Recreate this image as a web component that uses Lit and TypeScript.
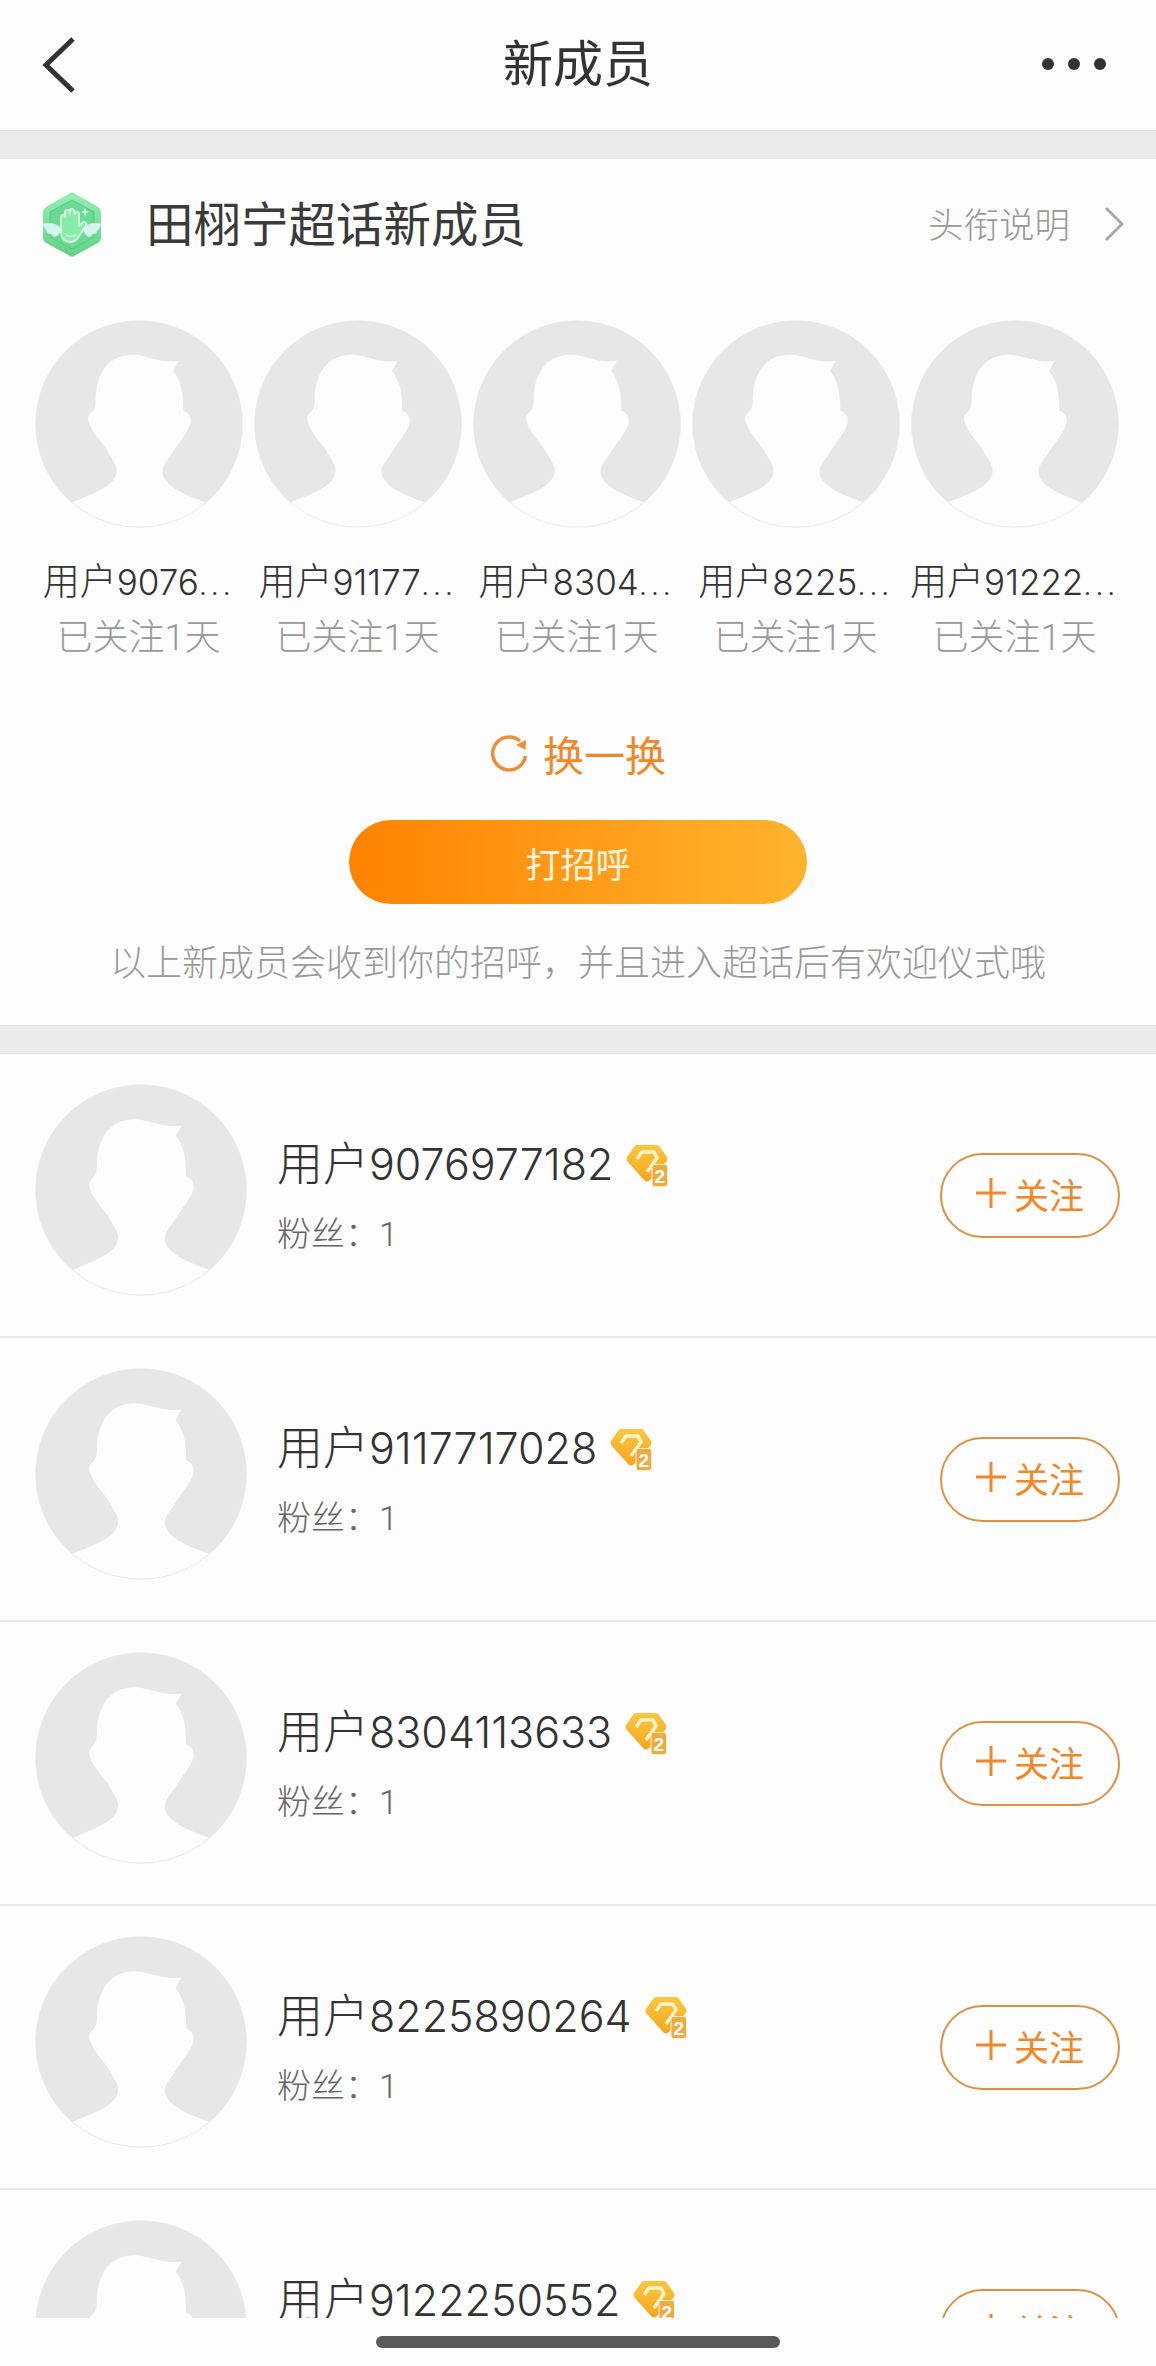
import { LitElement, html, css } from "lit";
import { customElement } from "lit/decorators.js";

const tiles = ["9076", "91177", "8304", "8225", "91222"];
const rows = ["9076977182", "9117717028", "8304113633", "8225890264", "9122250552"];

const avatar = html`<svg class="avatar-svg" viewBox="103 58 624 624" aria-hidden="true">
  <circle cx="415" cy="370" r="310" fill="#e7e7e7"/>
  <path fill="#fdfdfd" d="M285 300C285 210 330 160 400 162C440 163 480 190 535 180L517 210C540 240 548 270 548 330C565 335 572 350 570 365C565 395 530 430 510 465C498 482 485 495 485 515C490 560 560 585 615 605A310 310 0 0 1 215 605C270 580 345 560 348 510C348 490 330 470 320 450C305 425 262 385 262 350C265 335 285 335 285 300Z"/>
  <circle cx="415" cy="370" r="310" fill="none" stroke="#e8e8e8" stroke-width="2"/>
</svg>`;

const greenBadge = html`<svg class="badge" viewBox="0 0 84 84" aria-hidden="true">
  <defs>
    <linearGradient id="g1" x1="0" y1="0" x2="0" y2="1"><stop offset="0" stop-color="#96edb2"/><stop offset="1" stop-color="#62d186"/></linearGradient>
  </defs>
  <path d="M42 10L68 25Q71 27 71 30V56Q71 59 68 61L42 75L16 61Q13 59 13 56V30Q13 27 16 25Z" fill="url(#g1)"/>
  <path d="M42 18L64 30V55L42 67L20 55V30Z" fill="#6bdb94" stroke="#58c981" stroke-width="1"/>
  <path d="M12 42C20 40 26 41 31 46C31 51 27 55 24 55C22 52 20 52 17 51C18 49 16 48 15 47C16 46 13 44 12 42Z" fill="#d4f6ef"/>
  <path d="M72 42C64 40 58 41 53 46C53 51 57 55 60 55C62 52 64 52 67 51C66 49 68 48 69 47C68 46 71 44 72 42Z" fill="#d4f6ef"/>
  <path d="M31 50V36Q31 33 33 33Q35 33 35 35V31Q35 28 37.5 28Q40 28 40 31V29Q40 27 42 27Q44 27 44.500 30V32Q45 30 47 30Q49 30 49 33V44L52 41Q54 39 56 41Q57 43 55 45L49 54Q46 60 40 60Q31 59 31 50Z" fill="#86ecaa" stroke="#d2fae0" stroke-width="2" stroke-linejoin="round"/>
  <path d="M36 53Q41 56 46 53" fill="none" stroke="#d2fae0" stroke-width="1.500"/>
  <path d="M55 25L56 29L59 30L56 31L55 35L54 31L51 30L54 29Z" fill="#d6fbe4"/>
</svg>`;

const diamond = (num: string) => html`<svg class="diamond" viewBox="9 10 44 45" aria-hidden="true">
  <defs>
    <linearGradient id="d1" x1="0" y1="0" x2="0" y2="1"><stop offset="0" stop-color="#fbc740"/><stop offset="1" stop-color="#f5a51e"/></linearGradient>
  </defs>
  <path d="M21 12H41Q43 12 44 14L51 24Q52 26 51 28L34 47Q31 50 28 47L11 28Q10 26 11 24L18 14Q19 12 21 12Z" fill="url(#d1)"/>
  <path d="M21 26L26 19H38L41 25L31 39" fill="none" stroke="#fff3c8" stroke-width="3.500" stroke-linejoin="round"/>
  <rect x="36" y="31.500" width="15.500" height="22" rx="2.500" fill="#f0aa3e" stroke="#fff2d6" stroke-width="1"/>
  <text x="43.800" y="49.500" text-anchor="middle" class="lvl">${num}</text>
</svg>`;

@customElement("app-root")
export class AppRoot extends LitElement {
  static styles = css`
    :host {
      display: block;
      width: 1156px;
      height: 2366px;
      background: #fdfdfd;
      font-family: Roboto, "Noto Sans CJK SC", sans-serif;
      font-weight: 300;
      overflow: hidden;
      color: #333;
    }
    .page { height: 2366px; display: flex; flex-direction: column; }
    .nav {
      height: 130px;
      flex: none;
      box-sizing: border-box;
      padding: 0 42px;
      display: grid;
      grid-template-columns: 100px 1fr 100px;
      align-items: center;
    }
    .nav h1 { margin: 0; font-size: 50px; font-weight: 400; text-align: center; line-height: 130px; color: #333; }
    .back { width: 34px; height: 58px; display: block; margin-top: -1px; }
    .dots { justify-self: end; width: 64px; height: 12px; display: block; margin-right: 8px; margin-top: -2px; }
    .gap { flex: none; background: #ebebeb; border-top: 1px solid #e2e2e2; border-bottom: 1px solid #e6e6e6; box-sizing: border-box; height: 29px; }
    .card { flex: none; height: 866px; box-sizing: border-box; display: flex; flex-direction: column; }
    .card-head {
      height: 130px;
      flex: none;
      display: flex;
      align-items: center;
      padding: 0 32px 0 30px;
    }
    .badge { width: 84px; height: 84px; flex: none; margin-right: 32px; }
    .card-title { font-size: 47.5px; font-weight: 400; color: #3a3a3a; flex: 1; margin-top: -5px; }
    .explain { font-size: 35.5px; color: #999; margin-right: 34px; margin-top: -3px; }
    .chev { width: 20px; height: 36px; display: block; }
    .tiles { display: flex; padding: 31px 0 0 29px; }
    .tile { width: 219px; flex: none; display: flex; flex-direction: column; align-items: center; }
    .tile .avatar-svg { width: 208px; height: 208px; display: block; margin-bottom: 1px; }
    .tile-name { margin-top: 31px; font-size: 37px; line-height: 44px; white-space: nowrap; color: #333; }
    .tile-name .digits { font-family: Inter, sans-serif; font-size: 35px; }
    .tile-name .more { letter-spacing: 3px; }
    .tile-sub { font-size: 36px; line-height: 44px; margin-top: 11px; color: #999; white-space: nowrap; }
    .refresh {
      margin-top: 68px;
      height: 50px;
      display: flex;
      align-items: center;
      justify-content: center;
      gap: 13px;
      color: #f0882a;
      font-size: 41px;
      font-weight: 400;
      flex: none;
    }
    .refresh svg { width: 40px; height: 40px; display: block; }
    .hello {
      margin: 42px auto 0;
      width: 458px;
      height: 84px;
      border-radius: 42px;
      background: linear-gradient(90deg, #ff8400 0%, #ff8c0a 20%, #ffb42e 100%);
      color: #fff5e4;
      font-size: 35px;
      font-weight: 400;
      display: flex;
      align-items: center;
      justify-content: center;
      flex: none;
    }
    .note { margin-top: 40px; text-align: center; font-size: 36px; line-height: 40px; color: #999; white-space: nowrap; }
    .list { flex: 1; min-height: 0; overflow: hidden; }
    .row {
      height: 284px;
      box-sizing: border-box;
      border-bottom: 2px solid #e6e6e6;
      padding: 30px 36px 0 35px;
      display: flex;
      align-items: flex-start;
    }
    .row .avatar-svg { width: 212px; height: 212px; display: block; flex: none; }
    .info { margin: 55px 0 0 30px; flex: 1; min-width: 0; }
    .name-line { display: flex; align-items: center; height: 50px; gap: 12px; }
    .name { font-size: 46px; line-height: 50px; color: #333; white-space: nowrap; }
    .name .digits { font-family: Inter, sans-serif; font-size: 43px; }
    .diamond { width: 44px; height: 45px; display: block; flex: none; margin-top: 3px; }
    .lvl { font: 700 19px "Liberation Sans", sans-serif; fill: #fff; }
    .fans { margin-top: 23px; font-size: 34px; line-height: 44px; color: #666; }
    .follow {
      margin-top: 69px;
      width: 180px;
      height: 85px;
      flex: none;
      box-sizing: border-box;
      border: 2.5px solid #dd9044;
      border-radius: 43px;
      padding-bottom: 5px;
      display: flex;
      align-items: center;
      justify-content: center;
      gap: 8px;
      color: #f0882a;
      font-size: 35px;
      font-weight: 400;
    }
    .follow svg { width: 30px; height: 30px; display: block; }
    .bottom { height: 48px; flex: none; background: #fdfdfd; display: flex; justify-content: center; padding-top: 18px; box-sizing: border-box; }
    .home { width: 404px; height: 12px; border-radius: 6px; background: #5a5a5a; }
  `;

  render() {
    return html`<div class="page">
      <div class="nav">
        <svg class="back" viewBox="0 0 34 58" aria-hidden="true"><path d="M31 3L4 29L31 55" fill="none" stroke="#333" stroke-width="5"/></svg>
        <h1>新成员</h1>
        <svg class="dots" viewBox="0 0 64 12" aria-hidden="true"><circle cx="6" cy="6" r="6" fill="#333"/><circle cx="32" cy="6" r="6" fill="#333"/><circle cx="58" cy="6" r="6" fill="#333"/></svg>
      </div>
      <div class="gap"></div>
      <section class="card">
        <div class="card-head">
          ${greenBadge}
          <div class="card-title">田栩宁超话新成员</div>
          <div class="explain">头衔说明</div>
          <svg class="chev" viewBox="0 0 20 36" aria-hidden="true"><path d="M2 2L18 18L2 34" fill="none" stroke="#aaa" stroke-width="3"/></svg>
        </div>
        <div class="tiles">
          ${tiles.map((t) => html`<div class="tile">
            ${avatar}
            <div class="tile-name">用户<span class="digits">${t}</span><span class="more">...</span></div>
            <div class="tile-sub">已关注1天</div>
          </div>`)}
        </div>
        <div class="refresh">
          <svg viewBox="10 10 40 40" aria-hidden="true">
            <path d="M45.500 33A16.500 16.500 0 1 1 40 18" fill="none" stroke="#e9903a" stroke-width="3.500"/>
            <path d="M36 22L46 17L45.500 27Z" fill="#e9903a"/>
          </svg>
          <span>换一换</span>
        </div>
        <div class="hello">打招呼</div>
        <div class="note">以上新成员会收到你的招呼，并且进入超话后有欢迎仪式哦</div>
      </section>
      <div class="gap"></div>
      <div class="list">
        ${rows.map((r) => html`<div class="row">
          ${avatar}
          <div class="info">
            <div class="name-line"><span class="name">用户<span class="digits">${r}</span></span>${diamond("2")}</div>
            <div class="fans">粉丝：1</div>
          </div>
          <div class="follow">
            <svg viewBox="0 0 30 30" aria-hidden="true"><path d="M15 0V30M0 15H30" stroke="#f0882a" stroke-width="3"/></svg>
            <span>关注</span>
          </div>
        </div>`)}
      </div>
      <div class="bottom"><div class="home"></div></div>
    </div>`;
  }
}
